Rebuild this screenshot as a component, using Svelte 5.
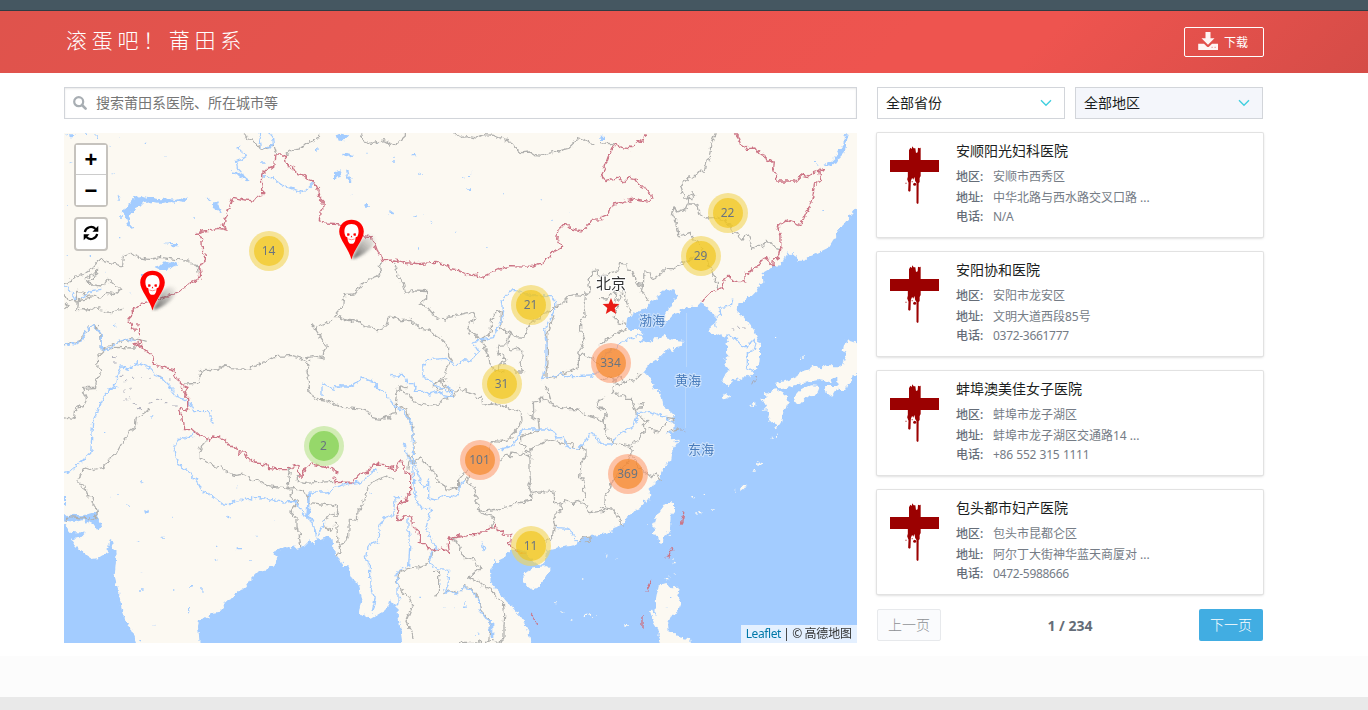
<script>
  const hospitals = [
    { name: '安顺阳光妇科医院', area: '安顺市西秀区', address: '中华北路与西水路交叉口路 ...', phone: 'N/A' },
    { name: '安阳协和医院', area: '安阳市龙安区', address: '文明大道西段85号', phone: '0372-3661777' },
    { name: '蚌埠澳美佳女子医院', area: '蚌埠市龙子湖区', address: '蚌埠市龙子湖区交通路14 ...', phone: '+86 552 315 1111' },
    { name: '包头都市妇产医院', area: '包头市昆都仑区', address: '阿尔丁大街神华蓝天商厦对 ...', phone: '0472-5988666' }
  ];

  const clusters = [
    { n: 14, x: 205, y: 118, size: 'medium' },
    { n: 22, x: 664, y: 80, size: 'medium' },
    { n: 29, x: 637, y: 123, size: 'medium' },
    { n: 21, x: 467, y: 172, size: 'medium' },
    { n: 31, x: 438, y: 251, size: 'medium' },
    { n: 334, x: 547, y: 230, size: 'large' },
    { n: 101, x: 416, y: 327, size: 'large' },
    { n: 369, x: 564, y: 341, size: 'large' },
    { n: 2, x: 260, y: 313, size: 'small' },
    { n: 11, x: 467, y: 413, size: 'medium' }
  ];

  const pins = [{ x: 89, y: 178 }, { x: 288, y: 127 }];

  // Map tiles: each has its own origin and is drawn in thirds of a pixel.
  const tiles = [
    {
      x: 64, y: 130,
      sea: '',
      land: '',
      water: 'M176 244l5 -12l10 -2l6 -14l12 -12l22 -6l18 6l20 0l18 4l24 -3l22 5l22 -6l8 -4l8 4l-6 12l-14 -2l-10 5l-22 -3l-26 3l-28 -3l-26 4l-10 10l-16 4l-4 10l-8 6l-4 12l-2 12l6 14l10 6l-10 2l-8 -12l-6 -16zM422 206l16 0l4 6l-16 -2zM448 216l12 2l8 16l6 14l-8 -4l-12 0l-8 -14zM504 124l16 2l18 10l20 14l-8 4l-22 -14l-24 -10zM270 410l18 -4l8 -8l14 -2l8 2l14 -6l8 8l-4 8l-18 6l-12 6l-16 0zM300 340l20 2l22 0l0 4l-24 0zM15 10h20l-6 12h-12zM2 12h6v4h-6zM66 10h8v5h-8zM94 16h8v8h-8zM162 22h4v3h-4zM240 38h8v4h-8zM590 97h12v4h-12zM140 44h3v3h-3zM190 90h3v3h-3zM146 130h3v3h-3zM756 55h5v12h-5zM160 190l6 10l2 12l-4 0zM168 262h6v4h-6zM388 262h5v4h-5zM196 490h6v3h-6zM150 585h4v5h-4zM230 432h8v4h-8zM120 422h4v4h-4zM165 318h4v4h-4zM8 376h4v4h-4zM80 375h4v8h-4zM10 228h4v3h-4zM20 94h6v3h-6zM300 75h4v3h-4z',
      rivers: 'M530 48l-8 6l14 14l15 8l-17 12l-16 6l2 20l12 12M590 0l-2 32l4 20l26 2l10 -12l-2 -20l-10 -16M590 136l36 8l26 20l66 24l34 -32M0 468l12 6l20 30l4 6M50 504l20 -10l14 -12l28 -4M0 650l20 -10l18 2l18 -12l10 -26l18 -18l18 12l10 16l0 44l10 4l26 -14l14 -12l26 -8l34 4M134 780l20 -16l4 -20l14 -34l24 8l24 -20l40 16l10 20l22 8l36 36M774 762l40 16',
      gray: 'M544 10l2 10l22 14l16 16l20 8l26 -14l10 32M666 75l18 -14l24 -4l16 -16l22 -8l20 -12l2 -10M102 390l18 2l56 16l2 -28l26 -10l22 14l30 4l34 -6l42 6l40 2l14 14l14 2l2 22M104 392l-16 18l-26 22l-26 6l-18 18l-18 8M62 444l26 -10l14 -16l-12 28l-22 6M66 448l18 16l28 4l12 -6l10 -14l10 10l14 12l12 8l-20 16l-24 -4l-20 14l-14 -8l-22 4M36 484l18 2l22 20l-36 6l-2 26l38 2l16 -8l20 8l26 8l20 -8l20 -2M36 484l2 30M0 490l14 22l16 -4M0 520l16 8l-12 8M0 648l20 -10l18 2l14 -10l10 -20l20 -24l16 4l12 24l2 44l22 -10l36 -12l30 -10l34 4l14 4M122 652l-2 10l-20 20l2 28l10 20l-14 22l-4 24l-38 2M112 662l32 -10l70 2l12 -14M366 762l36 -2l10 -38l12 -4l38 2l10 -8l14 -8l14 12l52 2l34 -16l26 -10l22 -12l50 -4l26 8l14 8M723 684l24 -4l30 6l2 -20l8 -20l-18 -26l-16 -24l4 -8l16 -4l36 -14M738 690l-10 8l6 14l-8 16l10 22l0 30M748 592l-6 -6l8 -2',
      red: 'M810 280l-30 -1l-14 -10l2 -20l8 -10l2 -24l-14 -14l-2 -24l-12 -24l-18 -6l-14 -12l-20 -4l-8 -16l-22 -12l-4 -20l-6 -8l-22 0l-4 34l-22 8l-16 14l-2 18l4 30l0 18l-16 4l-10 12l-34 -4l-24 -6l-6 0l-24 70l-4 14l8 8l4 6l-12 -4l-14 -2l-24 6l-26 2l-16 8l14 8l2 20l2 26l8 14l0 14l-10 8l-8 14l4 20l-4 12l-28 14l-20 12l-14 12l-24 10l-22 10l-46 10l-20 6l-12 10l-12 4l-4 8l2 12l-14 14l12 16l2 14l12 2M220 584h4M226 592v28M230 628l2 8l-22 6l10 6l10 0l16 14l16 12l6 10l0 16l16 8l46 12l2 16l10 16l14 14l16 6l-10 18',
      dots: 'M144 680h14M144 696h14M170 736h8M180 752h8M204 742h8M232 745h4M256 748h4M286 738h6M312 750h8'
    },
    {
      x: 334, y: 130,
      sea: '',
      land: '',
      water: 'M5 16l14 -8l14 6l12 0l-2 8l-14 10l-18 0zM28 68l14 2l16 4l0 6l-16 4l-14 -8zM0 126l14 -6l12 8l-6 12l-20 8zM36 120l8 4l2 10l-8 0zM34 132l12 6l6 14l-6 6l-4 -12zM50 192h6v4h-6zM92 222h12v4h-12zM90 226l18 -2l6 6l-20 0zM168 240l10 8l0 6l-8 -6zM238 256h7v5h-7zM266 254h4v4h-4zM290 270h6v4h-6zM292 282h12v3h-12zM384 142h4v4h-4zM404 138h7v5h-7zM408 128h4v5h-4zM400 175h8v5h-8zM174 94h12v4h-12zM178 80h4v4h-4zM234 72h8v4h-8zM256 128h4v4h-4zM252 352h5v5h-5zM364 308h4v4h-4zM456 350h5v3h-5zM504 188h4v3h-4zM620 208h4v3h-4zM652 272h4v4h-4zM706 248h4v4h-4zM796 20h14v10h-14zM130 36h4v4h-4zM94 68h4v3h-4z',
      rivers: 'M560 495l-14 -16l-12 0l-32 36l6 44l-12 22l-18 42l-54 10l-6 8l16 24l-14 16l-14 12l-14 -4l-16 14l-20 0l-20 -18l-54 4l-16 18l2 36l20 8l16 16l32 12l20 12M556 485l36 12l60 0l10 18l0 24L652 560L632 600L636 640L636 700L630 732L626 746L650 742L680 730L700 740L772 738L800 722M0 770l50 2l34 -28l30 10l26 26M172 736l24 4l6 -10l12 16l4 12l22 0l4 24',
      gray: 'M80 10l4 20l30 10l20 -4l16 -4l26 14l18 -10l20 -18l0 -10M362 10l18 12l22 -2l26 4l20 -10l30 2l20 8l22 8l20 12l8 12l14 12l26 -2l12 8l30 2l14 -6l26 -6l30 -8l16 -14l20 -18l16 4l14 10l18 4M148 394l-12 10l4 26l-14 12l-18 6l-22 12l-10 12l-16 20l-30 2l-4 34l-14 18l-12 14l14 0l20 10l38 4l20 16l22 2l16 10l12 -2l14 -14l10 -30l14 4l22 12l26 -4l10 12l18 12l24 6l18 14l26 16l10 10l10 12l0 30l8 12l-14 20l-8 26l-12 12l6 16l22 8l6 14M178 394l12 30l2 20l14 12l10 34l16 -4l12 -6l34 2l0 26l-20 14l24 12l20 24l34 16l8 -12l34 -8l40 -10l8 24l-20 10l-4 18l6 12l18 8l10 14l20 2M502 546l-16 2l-14 24l0 36l-12 8l-22 16l10 6l6 24l6 10l4 24l12 14l10 14M502 546l-2 50l30 12l-8 18l-4 18l-22 2l-6 22l20 10l4 20l-18 4l-4 20l20 4M530 608l14 12l28 2l6 -26l18 -24l22 -6l6 -14l24 -8l14 -12l30 -18l16 -18l22 -2l24 4l14 -12l-6 -40l10 -8l4 -16l14 -2l0 16l14 6M756 486l-6 44l4 28l-14 14l0 30l12 24l-18 44l40 14l20 22M736 670l0 40l-14 8l-22 6l-20 8l-22 10l-22 6l0 -18l6 -30l-4 -86l18 -48l4 -10M522 646l6 14l22 -6l18 20l-4 14l-10 10l8 14l4 14l-26 0M340 750l-24 4l-18 12l10 10l28 2M188 778l14 -10l16 6',
      red: 'M0 280l16 2l38 18l34 18l30 2l-2 8l10 22l6 18l12 14l4 10l32 -2l36 8l34 3l56 -4l34 8l6 10l22 4l36 16l20 2l4 -6l2 12l14 2l4 -6l48 -22l26 -6l8 -4l66 2l16 -8l10 0l18 -14l16 -20l26 -14l2 -4l-16 -22l4 -28l12 -12l18 0l10 10l32 6l14 -12l10 -10l4 -10l36 -2M810 122l-8 8l4 16',
      dots: ''
    },
    {
      x: 600, y: 130,
      sea: 'M771 235L745 265L725 290L716 304L708 320L698 335L688 352L660 365L630 378L612 392L596 392L588 380L580 375L578 368L572 376L564 366L556 378L556 388L542 395L540 406L520 408L505 420L488 430L490 458L478 466L470 480L450 500L430 515L412 520L410 545L430 560L450 585L462 600L470 620L480 645L480 680L478 700L470 720L456 730L452 742L445 734L430 740L418 750L410 744L400 750L390 764L378 765L366 758L372 740L385 720L380 708L372 690L385 680L378 665L385 655L375 640L384 628L380 615L368 620L350 610L325 608L330 590L350 575L335 545L318 530L300 520L290 530L275 530L250 535L235 548L222 552L210 565L195 575L185 572L200 550L205 540L220 515L232 495L222 480L214 476L208 482L200 475L180 490L174 502L165 510L150 520L135 536L120 540L100 550L100 556L82 560L78 590L90 600L120 600L130 612L122 635L140 640L165 625L180 624L190 618L200 625L215 628L248 632L245 650L222 655L215 665L205 655L190 670L175 685L150 700L130 725L150 745L165 780H790V215z',
      land: 'M790 636L771 640L760 635L750 632L740 628L734 640L728 665L734 668L742 660L736 682L730 700L714 712L700 712L690 705L670 712L640 708L632 716L600 725L592 738L570 750L550 754L530 758L528 772L540 778L560 775L590 764L620 757L654 750L668 752L690 760L700 745L712 742L712 765L720 780H736L742 764L756 752L758 736H790zM610 680h4v4h-4zM600 686h6v4h-6zM525 626h5v4h-5z',
      water: 'M670 104l20 -8l16 -14l10 -20l14 -20l2 -20l10 -12l4 2l-6 18l-2 20l-6 22l-14 14l-8 14l-18 8zM642 96h8v3h-8zM664 240h8v3h-8zM652 103h6v4h-6z',
      rivers: 'M0 690l30 -26l40 -30l48 -20l12 2M398 506l-4 22l-34 4l2 20l-16 14l2 24M384 618l22 8l22 24l14 0l20 -20l6 12l-6 20l-20 4l0 48l24 14M706 84l28 -28l4 -44M742 780l4 -6',
      gray: 'M346 10l-14 34l-2 28l-14 38l-4 20l-12 -10l-16 20l-20 6l-16 14l-6 10l12 34l20 2l10 -8l-4 -10l-16 10l-4 6l4 16l-6 12M262 222L290 222L296 250L318 264L345 262L370 272L392 285L398 308L412 312L420 328L430 326L436 310L446 316L458 356L476 346L490 350L500 334L514 338L528 356L541 358M262 222l-4 14l-28 10l-8 -10l-8 16l16 16l-2 16l6 34l32 -8l8 -4l0 14l30 30L320 390L334 420L342 440L352 460L352 480M0 436l20 0l12 -8l24 -6l6 -22l18 2l4 18l14 2l6 24l10 18l16 6l2 -50l14 6l10 20l10 -4l18 -12l14 -14l20 0l14 -10l18 -6l20 -14l24 -4M116 460l14 4l-6 22l12 8l10 22M0 505l20 2l16 -18l20 -8l18 2l0 20l8 20l10 30M48 485l-4 26l6 24l-8 28l12 14l24 6M0 644l24 -18l28 -18l28 -10M0 748l30 -8l12 16l18 -18l16 18l34 -10l16 -16M0 38l42 4M46 510l16 -4l4 -18M36 744l20 20l24 -10',
      red: 'M136 10l-6 20l-20 6l-24 20l-20 -4l-22 -10l-16 34l-16 44l-8 16l14 16l36 -10l16 18l14 -16l20 4l12 16l20 10l16 20l4 14l-12 6l-40 -8l-36 10l-28 6l-18 32l-20 8M406 10l10 14l6 22l20 10l26 -2l10 16l16 6l6 14l20 6l-2 16l12 30L530 153L586 153L604 135L622 140L640 128L660 122L671 116L656 124L662 150L643 164L640 190L632 222L602 285L562 270L532 290L543 320L542 360L538 380L520 392L518 410L508 398L500 380L486 390L478 408L464 412L444 428L434 430L436 452L420 458L396 450L388 436L372 450L366 472L350 480L330 488L316 502L306 518',
      dots: 'M392 600h8M412 592h8M428 594h8M458 766l12 -28'
    },
    {
      x: 64, y: 386,
      sea: 'M-15 390L14 386L60 388L85 380L100 372L100 395L112 424L96 428L84 410L72 404L66 414L56 402L35 408L-15 402zM-15 415L0 415L20 438L65 440L50 455L22 460L40 485L70 510L84 519L100 517L130 500L137 458L143 462L148 490L158 500L152 570L165 620L175 680L200 730L216 771V790H-15zM816 510L808 490L806 460L790 450L770 466L760 456L748 474L740 460L720 480L700 488L690 478L680 486L670 480L640 492L630 505L640 520L628 540L615 548L585 555L560 580L540 610L520 616L500 640L478 650L480 665L470 677L440 682L436 698L424 692L405 706L402 720L407 771V790H816z',
      land: '',
      water: 'M732 320l6 0l-2 50l4 28l-14 0zM0 325l6 4v30l-6 4zM242 376l8 -8l2 10l-8 10zM490 392h10v5h-10zM518 484h16v6h-16zM228 286h10v3h-10zM140 332h3v3h-3zM160 324h4v3h-4zM184 356h10v3h-10zM230 560h5v4h-5zM228 610h8v4h-8zM372 666h4v16h-4zM262 716h12v4h-12zM226 762h5v4h-5zM296 600h4v3h-4zM328 610h6v4h-6zM378 600h8v5h-8zM412 602h4v12h-4zM452 520h5v4h-5zM630 402h4v4h-4zM456 482h4v4h-4zM574 446h4v3h-4zM516 300h4v4h-4zM322 392h4v4h-4zM262 88h6v4h-6zM120 140h4v4h-4zM218 466h5v3h-5zM288 452h12v3h-12zM556 522h4v3h-4z',
      rivers: 'M160 2l-20 6l-20 24l-20 40l-14 36l-6 94l-30 26l-34 30l-16 4M314 0l20 28l40 20l16 26l46 0l6 16l-4 12l14 14M392 134l-6 14l-44 14l-12 26l6 30l8 20l30 18l20 24l26 38l16 6l40 30l22 2l8 -12l14 4l22 -12l18 6l8 -8l34 2l34 8l20 4l40 -2l20 36l34 24M810 310l-20 8l-38 0l-16 4l-4 24l0 46M774 0v30M734 400l14 14l6 20l4 20M762 450l8 -20l14 -26',
      gray: 'M0 96l24 4l8 -10l4 -26l22 -6l10 -20l-12 -28l0 -6l40 0M256 68l-10 10l-30 18l-2 26l-16 12l-8 20l-18 20l-16 30l-22 16l-14 24l-38 8l-18 -6l-10 16l-12 20l0 12l20 4l4 24l18 16l8 22l8 20l-8 20l-76 -8l-14 14M430 160l-14 16l-12 26l0 12l20 10l32 20l14 -4l14 16l30 12l26 -4l14 6l8 14l20 -2l22 16l50 6l20 6M680 246l-6 40l-2 18l12 10l-6 16l16 14l12 4l-18 16l-10 16l18 14l0 32l8 4l6 54M670 308l20 -4l16 8l20 8l8 24M700 270l0 16l20 6l90 -6M736 350l74 8M810 384l-20 6l-10 20l6 16l14 10l10 -16M730 0l2 14l12 14l20 12l20 2l26 12',
      red: 'M352 0l2 16l20 20l0 28l-12 10l-10 -12l-8 14l12 14l4 24l-2 14l24 0l22 20l30 10l6 8l6 -16l14 2l20 8l18 20l14 4l14 10l-2 8l20 -2l8 16l16 10l8 2l-2 -6l14 16l8 2l10 -8l8 12l26 4l36 0l16 -6l10 -4l2 32l10 0l10 -26l20 -10l22 6l20 6l10 -6l16 14l10 10',
      dots: 'M180 10v10M184 42h6M198 2v10M198 30v10M206 54l12 4M222 68h12M254 52l12 -4M278 40h14M302 50h8M324 60h14'
    },
    {
      x: 334, y: 386,
      sea: 'M0 505L15 515L20 528L30 540L40 540L48 550L50 565L56 580L70 588L75 600L85 640L78 680L95 690L110 698L150 675L165 660L170 640L178 655L190 660L192 690L198 720L205 771V790H0zM816 444L790 448L770 450L735 460L720 478L690 482L660 490L635 495L632 530L620 540L605 530L590 515L578 498L550 488L520 498L510 515L480 530L468 552L470 590L495 620L530 660L560 690L580 725L590 771V790H816z',
      land: 'M569 565L590 550L620 542L646 540L646 555L632 580L618 598L592 610L578 600L568 590zM610 520L620 500L635 500L630 535L612 532zM682 676h6v4h-6zM664 648h4v4h-4zM744 574h4v4h-4zM750 686h12v4h-12zM766 684h8v8h-8zM710 700h5v4h-5zM780 688h5v3h-5z',
      water: 'M195 632h6v5h-6zM390 648h5v5h-5zM388 658h7v5h-7zM362 660h4v4h-4zM332 660h4v4h-4zM426 742h4v4h-4zM436 672h4v4h-4zM316 592h4v4h-4zM256 632h5v4h-5zM466 708h12v46h-8zM116 252h12v5h-12zM360 622h8v4h-8zM110 320h4v3h-4z',
      rivers: 'M0 304l40 -10l40 -6l30 -24l16 -16M0 0h56M124 0l30 20l10 16l20 28l24 10l22 34l8 50l0 70l10 20l12 40l14 18l10 -30l0 60l18 6l30 -14l20 6l22 -8l2 -26l20 -20M496 190L536 180L566 129L642 129L662 140L668 156L690 154L700 180L730 190L750 170L768 142L780 145L804 175M208 170l10 30l18 40l4 60l8 48l18 22l24 0l-14 60l16 32l16 24l-14 10l-8 34l24 18l34 2l-2 50l-10 22l16 -6l20 8l20 -20l20 4l26 30l0 30l30 40l4 34M222 394l0 40l6 30l-4 76l-28 12l-10 14l6 30l0 54l-2 10M200 336l-16 -2l-8 54l-28 8l-12 26l-4 46l-28 10l-10 34l12 26l2 66l16 30l-10 46M664 424l8 4l36 2l20 36M246 0l-2 16l30 0l12 8l26 -8l14 12l26 6l4 -20l-14 -14M440 470l10 14l4 12M480 520l10 12',
      gray: 'M0 54l28 10l40 4l30 6l14 20l26 6l18 -8l12 4l4 -14l14 -2l2 -14l14 -4l16 8l6 30l12 20l0 20l4 34l0 30l-6 10l-10 14l-2 20M224 206l4 14l14 16l6 -14l12 -6l20 22l20 20l12 30l18 8l10 18l22 -10l12 2l0 -28l14 -16l14 -10M184 60l2 -28l10 -32M200 0l-6 10l18 10l14 2l12 24l20 8l36 6l20 -6l14 -16l28 -6l18 -20M376 0l8 12l36 10l6 12l18 0l2 24l28 -4l28 4l24 12l26 4l10 10l2 20l-10 22l-22 20l-2 12l-26 8l-30 -2l-10 20l2 20M496 222L516 208L530 212L534 198L552 202L562 208L568 202L592 220M404 270L398 290L424 304L420 320L430 334L426 350L436 358L430 372l20 4l30 -6l20 4l10 -10l20 -4l12 -10l22 0l14 -8l16 -2l-2 -18l-8 -20l6 -20l-2 -16l0 -74l6 -8M580 84l20 14l12 0l4 30l-14 12l-22 4l-20 8l0 20l12 8l4 16l16 2M600 98l-2 -50l24 -4l-10 -6l14 -2l30 20l28 8l20 4l22 0l30 20l44 14l10 14M634 0l10 20l6 20M590 196l6 -10l36 -20l20 -4l30 10l30 -2l10 12l10 10l12 -10l12 8l0 20l-16 20l0 24l-4 22l14 4l-2 34l8 10l-6 20M594 322l26 -4l10 4l16 -10l14 4l2 32l20 6l12 -10l22 8l14 -6l20 8l10 4l6 22l36 -4l8 4M676 356l10 16l-20 10l0 10l-10 8l6 16l-8 40l-20 10M430 372l16 12l36 8l-4 16l-6 18M350 458l20 10l10 20l0 20l14 10l22 -4l10 24l18 6l-16 10l-24 20l30 14l14 12l26 10l10 20l24 20l4 40l-2 30l0 34l-10 18l-34 -10l-20 18l-6 -16l-14 8l-50 0l-12 22M310 492l-20 16l-12 28l-24 6l-26 4l-34 14l-2 10l-4 18l14 24l24 24l10 20l-20 50l12 22l10 30M300 556l14 0l0 54l-8 20l4 4M328 620l22 -6l20 8l20 -20l20 4l22 26l8 40l24 30l4 34l-4 26M174 280l-16 -10l-36 14l-18 18l-16 52l-16 18l-2 32l-24 -4l-2 50l-6 14l-16 8l-4 24l-12 18M0 408l8 2l4 60l6 20M0 354l14 6l-4 22l-10 10M810 36l-20 10l0 18l20 10M736 466l10 -12l22 -4l0 16l-14 4',
      red: 'M0 268l4 22l50 -2l20 -22l10 -4l20 -4l14 -24l34 2l14 10l10 -4l4 10l10 4l-2 -20l10 -12l12 16l4 22l16 0l0 60l-8 6l-4 14l-14 4l-12 10l2 16l-6 20l8 10l20 -12l16 0l4 34l20 10l0 36l18 0l8 20l22 4l20 -8l10 10l12 4l-4 -36l4 -8l16 2l10 -10l18 6l10 -8l30 0l8 -8l20 0l4 -14l12 2l12 -8l4 16l14 -2l6 16l20 -2l-4 34l18 6l6 10l22 6M592 682l16 34',
      dots: ''
    },
    {
      x: 600, y: 386,
      sea: 'M165 0L172 10L185 30L190 60L215 80L222 88L216 96L225 110L222 136L195 140L210 148L212 160L238 158L240 170L225 176L222 190L214 200L210 225L200 235L185 255L180 280L165 285L160 300L148 312L152 340L140 340L130 355L120 365L108 370L95 385L80 395L65 418L40 425L40 435L20 440L0 445V790H790V0z',
      land: 'M484 38L492 40L500 30L494 20L512 24L516 12L530 10L545 18L560 30L566 44L562 62L552 72L548 90L540 118L528 124L520 108L506 110L510 84L504 70L488 72L498 62zM580 36L600 14L620 4L634 -2L660 0L654 16L640 34L622 30L600 54L582 50zM672 0L716 0L704 20L696 30L676 14zM190 360L208 348L222 352L222 378L212 390L210 428L190 460L188 474L178 470L176 458L162 440L160 420L168 394zM176 598L202 594L212 604L236 602L232 634L242 650L236 666L228 684L212 692L204 712L206 740L230 742L234 754L270 760L280 790L190 790L174 744L180 740L162 712L150 676L160 674L166 690L168 640zM366 32L382 24L394 32L380 38L370 40zM450 60L462 52L466 44L466 56L456 62zM470 236l14 -10l4 6l-14 8zM458 252h6v5h-6zM420 308l14 -16l8 2l-10 14l-10 8zM512 152h6v6h-6zM528 146h5v6h-5zM274 330h10v4h-10zM308 324h7v3h-7zM298 376h6v6h-6zM286 382h6v4h-6zM336 370h5v4h-5zM16 506h6v6h-6zM48 516h4v4h-4zM76 714h8v5h-8zM198 578h4v5h-4zM204 566h6v5h-6zM220 562h4v3h-4zM218 530h6v5h-6zM220 516h4v5h-4zM206 446h4v3h-4zM142 412h4v4h-4zM404 314h3v3h-3z',
      water: 'M224 164h12v5h-12zM213 630h4v3h-4zM200 662h4v3h-4z',
      rivers: 'M0 174h34l10 -14l16 -18l20 -10l22 -10l10 -42l40 -4l20 10l22 4l16 14l16 8',
      gray: 'M44 0l-6 10l12 18l20 -2l6 14l20 0l4 20l6 16l10 -10l14 0l0 -12l-14 -2M0 66l16 2l2 20l-12 14l10 20l2 20l6 14l16 14l22 4l32 8l6 -10l18 -12l6 -18l12 -4l-6 -18l14 -12l-20 -14l-14 -6l-6 -22M144 122l14 12l18 4l12 -16l12 -14M200 94l20 4l0 8l-12 0M94 186l-2 20l18 20l4 16l20 16l18 14l14 -8l12 16l4 4M92 206l-10 24l-18 20l-28 40l-10 30l-10 10l-2 26l0 20M14 366l24 4l14 14l10 30l6 4M198 138l40 -10M0 366l14 -2',
      red: 'M252 376l-8 40M222 484l-24 32M156 584l-18 34M126 690v38',
      dots: 'M240 132h6M252 138h4'
    }
  ];
</script>

<div class="page">
  <div class="strip"></div>
  <header>
    <div class="wrap head">
      <h1>滚蛋吧！莆田系</h1>
      <button class="download">
        <svg width="20" height="18" viewBox="0 0 20 18"><path fill="#fff" fill-opacity=".94" d="M7.500 0h5v6.200h4L10 12.800 3.500 6.200h4zM.2 11.700H6l2.800 2.800q1.200 1 2.400 0l2.800-2.800h6.200v6.200H.2z"/><path fill="#eb9c98" d="M13.500 14.800h1.200v1.200h-1.200zM16.500 14.800h1.200v1.200h-1.200z"/></svg>
        <span>下载</span>
      </button>
    </div>
  </header>

  <main class="wrap">
    <section class="left">
      <div class="search">
        <svg width="14" height="14" viewBox="0 0 14 14"><circle cx="5.700" cy="5.700" r="4.500" fill="none" stroke="#a8aeb3" stroke-width="2.200"/><path d="M9 9l3.600 3.600" stroke="#a8aeb3" stroke-width="2.600" stroke-linecap="round"/></svg>
        <span>搜索莆田系医院、所在城市等</span>
      </div>
      <div class="map">
        <svg class="canvas" width="793" height="510" viewBox="64 133 793 510">
          <defs>
            <filter id="coast" filterUnits="userSpaceOnUse" x="54" y="123" width="813" height="530" color-interpolation-filters="sRGB">
              <feTurbulence type="fractalNoise" baseFrequency=".22" numOctaves="2" seed="4"/>
              <feDisplacementMap in="SourceGraphic" scale="6" xChannelSelector="R" yChannelSelector="G"/>
            </filter>
          </defs>
          <rect x="64" y="133" width="793" height="510" fill="#fcf9f2"/>
          <g filter="url(#coast)">
            {#each tiles as t}
              <g transform="translate({t.x} {t.y}) scale(.33333)"><path d={t.sea} fill="#a3ccff"/></g>
            {/each}
            {#each tiles as t}
              <g transform="translate({t.x} {t.y}) scale(.33333)" fill="none" stroke-linejoin="round">
                <path d={t.land} fill="#fcf9f2"/>
                <path d={t.water} fill="#a3ccff"/>
                <path d={t.gray} stroke="#b0b0ae" stroke-width="3.800"/>
                <path d={t.rivers} stroke="#a3ccff" stroke-width="4"/>
                <path d={t.red} stroke="#cc7485" stroke-width="4"/>
                <path d={t.dots} stroke="#a9aab8" stroke-width="3"/>
              </g>
            {/each}
          </g>
          <path d="M686.500 313v54M685.500 387v41" stroke="#b8d7fc" stroke-width="1"/>
          <path d="M611 298l2.300 5.700 6.100.4-4.700 3.900 1.500 6-5.200-3.300-5.200 3.300 1.500-6-4.700-3.900 6.100-.4z" fill="#e91c16"/>
          <text class="city" x="596" y="289">北京</text>
          <g class="sea">
            <text x="639" y="324.500">渤海</text>
            <text x="675" y="384.500">黄海</text>
            <text x="688" y="453.500">东海</text>
          </g>
        </svg>

        {#each clusters as c}
          <div class="cluster {c.size}" style="left:{c.x}px;top:{c.y}px"><span>{c.n}</span></div>
        {/each}

        {#each pins as p}
          <svg class="pin" style="left:{p.x}px;top:{p.y}px" width="46" height="42" viewBox="0 0 46 42">
            <defs>
              <linearGradient id="shade{p.x}" x1="0" x2="1" y1="1" y2="0"><stop offset="0" stop-color="#444" stop-opacity=".85"/><stop offset="1" stop-color="#666" stop-opacity="0"/></linearGradient>
              <filter id="soft{p.x}"><feGaussianBlur stdDeviation="1.500"/></filter>
            </defs>
            <path d="M13 40q9-2 18-10 8-8 3-13-6-3-13 6z" fill="url(#shade{p.x})" filter="url(#soft{p.x})"/>
            <path d="M12.500 40.500C10.500 31 0 20 .2 12.500.4 5 6 .8 12.500.8S24.600 5 24.800 12.500C25 20 14.500 31 12.500 40.500z" fill="#f00"/>
            <path d="M12.500 5C7.500 5 5.400 8 5.400 12.500q0 3 1.200 5.100l1.700.7q.3 4.400 1.900 5.900 2.300 1.200 4.600 0 1.600-1.500 1.900-5.900l1.700-.7q1.200-2.100 1.200-5.100C19.600 8 17.500 5 12.500 5z" fill="#fff"/>
            <path d="M8 14.600q1.500-.8 2.700.1l-.3 1.900-2 .3zM14.300 14.700q1.400-.9 2.700-.1l-.4 2.300-2-.3zM12.500 16.600l.9 1.600h-1.800z" fill="#f00"/>
            <path d="M9.400 20q3 1.500 6.200 0" fill="none" stroke="#ff5a5a" stroke-width=".7"/>
          </svg>
        {/each}

        <div class="controls">
          <div class="zoom"><button>+</button><button>−</button></div>
          <button class="refresh" aria-label="刷新">
            <svg width="16" height="16" viewBox="0 0 16 16"><path d="M1.800 7A6.300 6.300 0 0 1 12.600 4M14.200 9A6.300 6.300 0 0 1 3.400 12" fill="none" stroke="#000" stroke-width="2.200"/><path d="M15.300.8v6H9.400zM.7 15.200v-6h5.900z"/></svg>
          </button>
        </div>
        <div class="credit"><a href="#leaflet">Leaflet</a> | © 高德地图</div>
      </div>
    </section>

    <aside>
      <div class="filters">
        <div class="select"><span>全部省份</span><svg width="12" height="8" viewBox="0 0 12 8"><path d="M1 1.200l5 5 5-5" fill="none" stroke="#40cfdf" stroke-width="1.400"/></svg></div>
        <div class="select off"><span>全部地区</span><svg width="12" height="8" viewBox="0 0 12 8"><path d="M1 1.200l5 5 5-5" fill="none" stroke="#40cfdf" stroke-width="1.400"/></svg></div>
      </div>
      {#each hospitals as h}
        <article>
          <svg class="cross" width="50" height="64" viewBox="0 0 150 192">
            <path fill="#9b0101" d="M3 51H60V22l4-8 4 4 2-8 4 6 5 0 2 14 5-2 1-14 4 2 4-2V51h55v36H95v12l-3 6v12l-3 4-.5 60-3 2-3-3 0-60-4-6-2-12-4 8-3-6-4 10-1 30-4 2-3-3 1-24-4-10 2-8V87H3z"/>
            <circle cx="77" cy="124" r="4.500" fill="#9b0101"/>
            <path fill="#b84040" d="M49 119h4v3h-4zM68 114h3v4h-3z"/>
          </svg>
          <div class="info">
            <h2>{h.name}</h2>
            <dl>
              <dt>地区:</dt><dd>{h.area}</dd>
              <dt>地址:</dt><dd>{h.address}</dd>
              <dt>电话:</dt><dd class="phone">{h.phone}</dd>
            </dl>
          </div>
        </article>
      {/each}
      <nav>
        <button class="prev">上一页</button>
        <strong>1 / 234</strong>
        <button class="next">下一页</button>
      </nav>
    </aside>
  </main>
  <div class="pale"></div>
  <footer></footer>
</div>

<style>
  :global(body) { margin: 0; background: #fff; overflow: hidden; }
  .page { height: 710px; display: flex; flex-direction: column; overflow: hidden; font-family: "Noto Sans", "Noto Sans CJK SC", sans-serif; color: #1b1e21; }
  .page *, .page { box-sizing: border-box; }
  button { font-family: inherit; padding: 0; margin: 0; border: 0; }
  .strip { height: 11px; flex: none; background: #455761; border-bottom: 1px solid #303c43; }
  header { height: 62px; flex: none; background: linear-gradient(135deg, #df534c 0%, #e5534d 25%, #ee544f 65%, #ee544f 75%, #d54c47 100%); }
  .wrap { width: 1200px; margin-left: 64px; }
  .head { height: 100%; display: flex; align-items: center; justify-content: space-between; }
  h1 { margin: 0 0 6px 2px; font: 300 21px/32px "Noto Sans CJK SC", sans-serif; letter-spacing: 4.700px; color: #fff; }
  .download { width: 80px; height: 30px; border: 1px solid #fff; border-radius: 2px; background: none; color: #fff; display: flex; align-items: center; padding-left: 13px; gap: 6px; font-size: 12px; }
  .download svg { margin-top: -3px; }
  main { flex: none; height: 583px; display: flex; gap: 20px; padding-top: 14px; }
  .left { width: 793px; }
  .search { height: 32px; border: 1px solid #d2d5da; box-shadow: inset 0 1px 2px rgba(0,0,0,.09); display: flex; align-items: center; gap: 9px; padding-left: 8px; font-size: 14px; color: #757575; }
  .search span, .select span { padding-bottom: 2px; }
  .map { position: relative; margin-top: 14px; height: 510px; overflow: hidden; background: #fcf9f2; }
  .canvas { display: block; }
  .city { font: 15px "Noto Sans CJK SC", sans-serif; fill: #333; stroke: #fff; stroke-width: 2px; paint-order: stroke; }
  .sea text { font: 13px "Noto Sans CJK SC", sans-serif; fill: #4a7dbd; stroke: #cfe3fb; stroke-width: 2px; paint-order: stroke; }
  .cluster { position: absolute; width: 40px; height: 40px; margin: -20px 0 0 -20px; border-radius: 50%; padding: 5px; }
  .cluster span { display: block; width: 30px; height: 30px; border-radius: 50%; text-align: center; font-size: 12px; line-height: 30px; text-indent: -1px; color: #6a7480; }
  .medium { background: rgba(241,211,87,.6); }
  .medium span { background: rgba(240,194,12,.6); }
  .large { background: rgba(253,156,115,.6); }
  .large span { background: rgba(241,128,23,.6); }
  .small { background: rgba(181,226,140,.6); }
  .small span { background: rgba(110,204,57,.6); }
  .pin { position: absolute; margin: -41px 0 0 -13px; }
  .controls { position: absolute; left: 10px; top: 10px; display: flex; flex-direction: column; gap: 10px; }
  .zoom, .refresh { width: 34px; border: 2px solid #c6c3be; border-radius: 4px; background: #fff; }
  .zoom { height: 64px; display: flex; flex-direction: column; }
  .zoom button { height: 30px; background: #fff; color: #000; font: bold 22px/28px "Liberation Sans", sans-serif; padding-top: 1px; }
  .zoom button:first-child { height: 30px; border-bottom: 1px solid #ccc; }
  .refresh { height: 34px; display: flex; align-items: center; justify-content: center; padding: 0 1px 2px 0; }
  .credit { position: absolute; right: 0; bottom: 0; height: 18px; padding: 0 5px; background: rgba(255,255,255,.7); font-size: 12px; line-height: 18px; letter-spacing: -.1px; color: #333; white-space: nowrap; }
  .credit a { color: #0078a8; text-decoration: none; letter-spacing: -.4px; }
  .credit { word-spacing: -.7px; }
  aside { width: 386px; display: flex; flex-direction: column; gap: 15px; }
  .filters { display: flex; gap: 10px; height: 32px; margin-bottom: -1px; }
  .select { flex: 1; border: 1px solid #d2d5da; display: flex; align-items: center; justify-content: space-between; padding: 0 12px 0 8px; font-size: 14px; }
  .off { background: #f4f6fb; }
  article { height: 104px; flex: none; border-radius: 1px; background: #fff; box-shadow: 0 0 0 1px #e2e2e2, 0 1px 3px rgba(0,0,0,.25); display: flex; padding: 10px 0 0 12px; gap: 17px; }
  h2 { margin: -2px 0 5px; font-size: 14px; line-height: 20px; font-weight: 400; }
  dl { margin: 0; display: grid; grid-template-columns: 37px auto; grid-template-rows: 21px 21px 18px; align-items: center; font-size: 12px; line-height: 18px; color: #656d78; }
  dt { font-weight: 500; }
  dd { margin: 0; color: #757c86; white-space: nowrap; }
  .phone { letter-spacing: -.3px; word-spacing: .8px; }
  nav { display: flex; align-items: center; justify-content: space-between; height: 32px; flex: none; }
  nav button { width: 64px; height: 32px; font-size: 14px; font-weight: 300; border-radius: 2px; padding-bottom: 2px; }
  .prev { border: 1px solid #e7e9ec; background: #fafbfd; color: #8d9094; }
  .next { background: #41ade2; color: #fff; }
  strong { font-size: 14px; color: #656d78; }
  .pale { height: 41px; flex: none; background: #fcfcfc; }
  footer { flex: 1; background: #e9e9e9; }
</style>
